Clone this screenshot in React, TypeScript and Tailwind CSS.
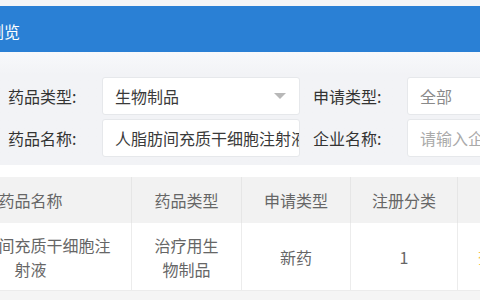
import React from "react"

const font = { fontFamily: '"Noto Sans CJK SC", "Noto Sans", sans-serif' }

interface FilterFieldProps {
  label: string
  children: React.ReactNode
  inputWidth: string
}

function FilterField({ label, children, inputWidth }: FilterFieldProps) {
  return (
    <div className="flex items-center">
      <div className="w-[94px] shrink-0 text-[16px] text-[#333]">{label}</div>
      <div
        className={`${inputWidth} relative flex h-[38px] shrink-0 items-center overflow-hidden rounded-[3px] border border-[#e6e8eb] bg-white pl-[12px] text-[16px] whitespace-nowrap`}
      >
        {children}
      </div>
    </div>
  )
}

const columns = [
  { head: "药品名称", cell: "人脂肪间充质干细胞注射液", width: "w-[202px] px-[18px]" },
  { head: "药品类型", cell: "治疗用生物制品", width: "w-[110px] px-[16px]" },
  { head: "申请类型", cell: "新药", width: "w-[109px] px-[10px]" },
  { head: "注册分类", cell: "1", width: "w-[107px] px-[10px]" },
]

export default function App() {
  return (
    <div className="flex h-[300px] w-[480px] flex-col overflow-hidden bg-white" style={font}>
      <div className="h-[6px] shrink-0 bg-[#f4f5f7]" />
      <div className="flex h-[46px] shrink-0 items-center bg-[#2a80d5] pt-[4px]">
        <span className="ml-[-12px] text-[16px] text-white">浏览</span>
      </div>

      <div className="flex h-[113px] shrink-0 flex-col gap-[4px] bg-gradient-to-b from-[#f8f9fb] to-[#f2f3f6] to-[20%] pt-[25px] pl-[8px]">
        <div className="flex gap-[13px]">
          <FilterField label="药品类型:" inputWidth="w-[198px]">
            <span className="text-[#3a3a3a]">生物制品</span>
            <span className="absolute top-[15px] right-[13px] h-0 w-0 border-x-[6px] border-t-[6px] border-x-transparent border-t-[#b8b8b8]" />
          </FilterField>
          <FilterField label="申请类型:" inputWidth="w-[200px]">
            <span className="text-[#8a8a8a]">全部</span>
          </FilterField>
        </div>
        <div className="flex gap-[13px]">
          <FilterField label="药品名称:" inputWidth="w-[198px]">
            <span className="text-[#3a3a3a]">人脂肪间充质干细胞注射液</span>
          </FilterField>
          <FilterField label="企业名称:" inputWidth="w-[200px]">
            <span className="text-[#aaa]">请输入企业名称</span>
          </FilterField>
        </div>
      </div>

      <div className="h-[12px] shrink-0 bg-white" />

      <div className="ml-[-70px] flex shrink-0 flex-col">
        <div className="flex h-[46px] bg-[#f2f2f2]">
          {columns.map((c) => (
            <div
              key={c.head}
              className={`${c.width} flex shrink-0 items-center justify-center border-r border-[#e6e6e6] text-[16px] text-[#666]`}
            >
              {c.head}
            </div>
          ))}
          <div className="w-[60px] shrink-0" />
        </div>
        <div className="flex h-[68px] border-b border-[#ececec] bg-white">
          {columns.map((c) => (
            <div
              key={c.head}
              className={`${c.width} flex shrink-0 items-center justify-center border-r border-[#ececec] text-center text-[16px] leading-[24px] text-[#666]`}
            >
              {c.cell}
            </div>
          ))}
          <div className="flex w-[60px] shrink-0 items-center pl-[20px] text-[16px] text-[#f5c04d]">
            查看
          </div>
        </div>
      </div>

      <div className="flex-1 bg-[#f5f5f5]" />
    </div>
  )
}
